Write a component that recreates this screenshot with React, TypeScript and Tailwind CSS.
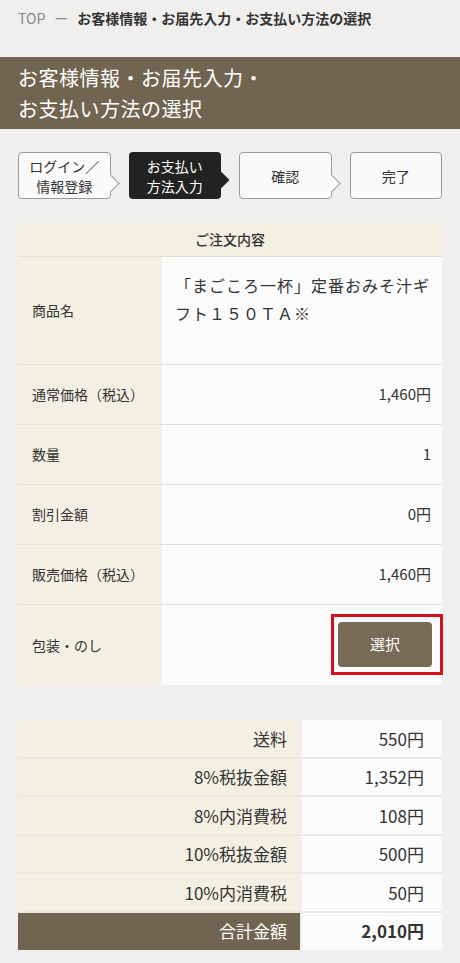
import React from 'react';

const rows = [
  { label: '通常価格（税込）', value: '1,460円' },
  { label: '数量', value: '1' },
  { label: '割引金額', value: '0円' },
  { label: '販売価格（税込）', value: '1,460円' },
];

const totals = [
  { label: '送料', value: '550円' },
  { label: '8%税抜金額', value: '1,352円' },
  { label: '8%内消費税', value: '108円' },
  { label: '10%税抜金額', value: '500円' },
  { label: '10%内消費税', value: '50円' },
];

const steps = [
  { lines: ['ログイン／', '情報登録'], active: false, arrow: true },
  { lines: ['お支払い', '方法入力'], active: true, arrow: true },
  { lines: ['確認'], active: false, arrow: true },
  { lines: ['完了'], active: false, arrow: false },
];

function Step({ lines, active, arrow }: { lines: string[]; active: boolean; arrow: boolean }) {
  return (
    <div
      className={
        active
          ? 'relative h-[47px] rounded-[4px] bg-[#222] text-white flex flex-col items-center justify-center text-[14px] leading-[20px]'
          : 'relative h-[47px] rounded-[4px] border border-[#9a9a9a] bg-[#fafafa] text-[#333] flex flex-col items-center justify-center text-[14px] leading-[20px]'
      }
    >
      {lines.map((l) => (
        <span key={l} className="relative z-10">{l}</span>
      ))}
      {/* arrow notch */}
      {arrow && (
        <span
          className={
            active
              ? 'absolute right-[-6px] top-[22px] w-[12px] h-[12px] rotate-45 bg-[#222]'
              : 'absolute right-[-7px] top-[24px] w-[13px] h-[13px] rotate-45 bg-[#fafafa] border-t border-r border-[#9a9a9a]'
          }
        />
      )}
    </div>
  );
}

export default function App() {
  return (
    <div
      className="min-h-[963px] bg-[#f0efed] text-[#333] pb-6"
      style={{ fontFamily: "'Noto Sans CJK JP', 'Noto Sans', sans-serif" }}
    >
      {/* Breadcrumb */}
      <div className="px-[18px] pt-[8px] h-[57px] text-[14px] leading-[20px] flex items-start">
        <span className="text-[#888]">TOP</span>
        <span className="text-[#888] mx-[9px]">ー</span>
        <span className="font-bold text-[#333]">お客様情報・お届先入力・お支払い方法の選択</span>
      </div>

      {/* Title bar */}
      <div className="bg-[#716450] text-white px-[18px] py-[5px] text-[20px] leading-[31px] tracking-[0.5px]">
        <div>お客様情報・お届先入力・</div>
        <div>お支払い方法の選択</div>
      </div>

      {/* Steps */}
      <div className="mx-[18px] mt-[23px] grid grid-cols-4 gap-[18px]">
        {steps.map((s, i) => (
          <Step key={i} {...s} />
        ))}
      </div>

      {/* Order table */}
      <div className="mx-[18px] mt-[24px]">
        <div className="bg-[#f3efe3] h-[34px] flex items-center justify-center text-[14px] font-medium border-b border-[#e3ded1]">
          ご注文内容
        </div>
        <div className="flex border-b border-[#e3e0da]">
          <div className="w-[144px] shrink-0 bg-[#f3efe3] px-[14px] flex items-center text-[14px] h-[107px]">商品名</div>
          <div className="flex-1 bg-[#fbfbfb] pl-[13px] pr-[8px] pt-[14px] text-[16px] leading-[28px] tracking-[1px]">
            「まごころ一杯」定番おみそ汁ギフト１５０ＴＡ※
          </div>
        </div>
        {rows.map((r) => (
          <div key={r.label} className="flex h-[60px] border-b border-[#e3e0da]">
            <div className="w-[144px] shrink-0 bg-[#f3efe3] px-[14px] flex items-center text-[14px]">{r.label}</div>
            <div className="flex-1 bg-[#fbfbfb] px-[11px] flex items-center justify-end text-[15px]">{r.value}</div>
          </div>
        ))}
        <div className="flex h-[80px]">
          <div className="w-[144px] shrink-0 bg-[#f3efe3] px-[14px] flex items-center text-[14px]">包装・のし</div>
          <div className="flex-1 bg-[#fbfbfb] flex items-center justify-end">
            <div className="mr-[-1px] mt-[-2px] border-[3px] border-[#d3101c] pl-[4px] pr-[8px] py-[5px]">
              <button className="block w-[94px] h-[45px] rounded-[4px] bg-[#776a56] text-white text-[15px]">
                選択
              </button>
            </div>
          </div>
        </div>
      </div>

      {/* Totals */}
      <div className="mx-[18px] mt-[35px]">
        {totals.map((t) => (
          <div key={t.label} className="flex h-[38.5px] border-b-2 border-[#ebe8e2]">
            <div className="w-[282px] shrink-0 bg-[#f3efe3] pr-[13px] flex items-center justify-end text-[17px]">{t.label}</div>
            <div className="flex-1 ml-[2px] bg-[#fbfbfb] pr-[18px] flex items-center justify-end text-[17px]">{t.value}</div>
          </div>
        ))}
        <div className="flex h-[37px]">
          <div className="w-[282px] shrink-0 bg-[#716450] text-white pr-[13px] flex items-center justify-end text-[17px]">合計金額</div>
          <div className="flex-1 ml-[2px] bg-[#fbfbfb] pr-[18px] flex items-center justify-end text-[17px] font-bold">2,010円</div>
        </div>
      </div>
    </div>
  );
}
